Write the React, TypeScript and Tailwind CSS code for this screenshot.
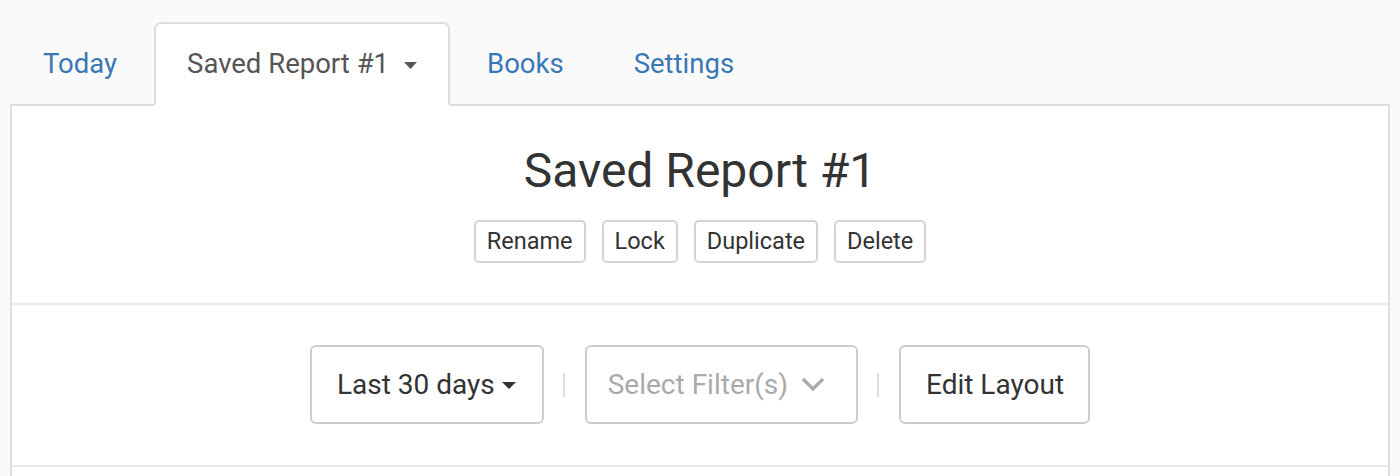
import React from "react";

function Caret({ className, w = 13, h = 7 }: { className?: string; w?: number; h?: number }) {
  return (
    <svg width={w} height={h} viewBox={`0 0 ${w} ${h}`} className={className}>
      <path d={`M0 0 L${w} 0 L${w / 2} ${h} Z`} fill="currentColor" />
    </svg>
  );
}

function Chevron() {
  return (
    <svg width="24" height="15" viewBox="0 0 24 15" className="text-[#aaaaaa]">
      <polyline points="2,2 12,12 22,2" fill="none" stroke="currentColor" strokeWidth="3.2" strokeLinecap="butt" strokeLinejoin="miter" />
    </svg>
  );
}

export default function App() {
  const smallBtn =
    "h-[43px] px-[11px] border-2 border-[#d4d4d4] rounded-[5px] bg-white text-[23.5px] text-[#333333] flex items-center leading-none";
  const bigBtn =
    "h-[79px] border-2 border-[#cccccc] rounded-[6px] bg-white text-[28px] flex items-center leading-none";
  return (
    <div
      className="h-screen overflow-hidden bg-[#fafafa] pt-[22px] px-[10px]"
      style={{ fontFamily: "Roboto, 'Noto Sans', sans-serif" }}
    >
      <div className="flex items-end gap-[4px] relative z-10 -mb-[2px]">
        <div className="h-[84px] px-[33px] flex items-center text-[27.5px] text-[#3a77b5]">Today</div>
        <div className="h-[84px] px-[31px] flex items-center text-[27.5px] text-[#555555] bg-white border-2 border-[#dddddd] border-b-white rounded-t-[7px]">
          <span>Saved Report #1</span>
          <Caret className="ml-[15px] mt-[2px] text-[#555555]" />
        </div>
        <div className="h-[84px] px-[33px] flex items-center text-[27.5px] text-[#3a77b5]">Books</div>
        <div className="h-[84px] px-[33px] flex items-center text-[27.5px] text-[#3a77b5]">Settings</div>
      </div>
      <div className="bg-white border-2 border-[#dddddd] h-[500px]">
        <div className="pt-[37px] pb-[40px] border-b-2 border-[#ebebeb] flex flex-col items-center">
          <h1 className="text-[48px] leading-[56px] text-[#333333] font-normal">Saved Report #1</h1>
          <div className="mt-[21px] flex gap-[16px]">
            <button className={smallBtn}>Rename</button>
            <button className={smallBtn}>Lock</button>
            <button className={smallBtn}>Duplicate</button>
            <button className={smallBtn}>Delete</button>
          </div>
        </div>
        <div className="pt-[40px] pb-[41px] border-b-2 border-[#ebebeb] flex justify-center items-center">
          <button className={bigBtn + " pl-[25px] pr-[26px] text-[#333333]"}>
            <span>Last 30 days</span>
            <Caret w={14} h={7} className="ml-[7px] mt-[2px] text-[#333333]" />
          </button>
          <span className="ml-[19px] mr-[20px] w-[2px] h-[24px] bg-[#e0e0e0]" />
          <button className={bigBtn + " pl-[21px] pr-[31px] text-[#aaaaaa]"}>
            <span>Select Filter(s)</span>
            <span className="ml-[13px] flex items-center"><Chevron /></span>
          </button>
          <span className="ml-[19px] mr-[20px] w-[2px] h-[24px] bg-[#e0e0e0]" />
          <button className={bigBtn + " pl-[25px] pr-[24px] text-[#333333]"}>Edit Layout</button>
        </div>
      </div>
    </div>
  );
}
